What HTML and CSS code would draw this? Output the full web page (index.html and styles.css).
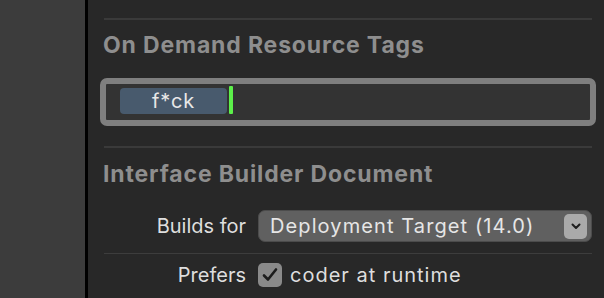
FILE: index.html
```html
<!DOCTYPE html>
<html>
<head>
<meta charset="utf-8">
<link rel="stylesheet" href="styles.css">
</head>
<body>
<div class="window">
  <div class="sidebar"></div>
  <div class="split"></div>
  <div class="inspector">
    <div class="sep sep-top"></div>
    <h2 class="section-title title-odr">On Demand Resource Tags</h2>
    <div class="token-field">
      <span class="token">f*ck</span>
      <span class="caret"></span>
    </div>
    <div class="sep sep-mid"></div>
    <h2 class="section-title title-ib">Interface Builder Document</h2>
    <div class="prop-row row-builds">
      <span class="prop-label">Builds for</span>
      <div class="popup">
        <span class="popup-text">Deployment Target (14.0)</span>
        <span class="popup-arrow">
          <svg width="10" height="7" viewBox="0 0 10 7"><path d="M1.5 1.5 L5 5 L8.5 1.5" fill="none" stroke="#1e1e1e" stroke-width="2" stroke-linecap="round" stroke-linejoin="round"/></svg>
        </span>
      </div>
    </div>
    <div class="sep sep-low"></div>
    <div class="prop-row row-prefers">
      <span class="prop-label">Prefers</span>
      <label class="check">
        <span class="checkbox">
          <svg width="18" height="16" viewBox="0 0 18 16"><path d="M3 8.5 L7 12.5 L15 2.5" fill="none" stroke="#1c1c1c" stroke-width="2.6" stroke-linecap="round" stroke-linejoin="round"/></svg>
        </span>
        <span class="check-text">coder at runtime</span>
      </label>
    </div>
  </div>
</div>
</body>
</html>
```
FILE: styles.css
```css
html, body {
  margin: 0;
  padding: 0;
  background: #282828;
}
.window {
  display: flex;
  width: 604px;
  height: 298px;
  overflow: hidden;
  font-family: "Inter", "Liberation Sans", sans-serif;
}
.sidebar {
  width: 85px;
  background: #3c3c3c;
  flex: none;
}
.split {
  width: 3px;
  background: #000;
  flex: none;
}
.inspector {
  flex: 1;
  background: #282828;
  padding: 0 12px 0 15px;
  display: flex;
  flex-direction: column;
}
.sep {
  height: 2px;
  background: #3a3a3a;
  margin-left: 1px;
  flex: none;
}
.sep-top { margin-top: 18px; }
.sep-mid { margin-top: 20px; }
.sep-low { margin-top: 11px; height: 1px; background: #3d3d3d; }
.section-title {
  margin: 0;
  font-size: 23px;
  line-height: 26px;
  font-weight: 700;
  color: #8e8e8e;
  letter-spacing: 0.85px;
}
.title-odr { margin-top: 12px; }
.title-ib { margin-top: 13px; }
.token-field {
  margin: 20px -4px 0 -3px;
  height: 32px;
  border: 6px solid #7f7f7f;
  border-radius: 7px;
  background: #333333;
  display: flex;
  align-items: flex-start;
  padding: 4px 0 0 14px;
  box-sizing: content-box;
}
.token {
  width: 107px;
  height: 26px;
  background: #485a6d;
  border-radius: 4px;
  color: #e8e8e8;
  font-size: 20px;
  line-height: 26px;
  letter-spacing: 0.8px;
  text-align: center;
}
.caret {
  width: 4px;
  height: 28px;
  margin: -2px 0 0 2px;
  background: #5cf04a;
  border-radius: 1px;
}
.prop-row {
  display: grid;
  grid-template-columns: 143px 1fr;
  column-gap: 12px;
  align-items: center;
}
.row-builds { margin-top: 23px; }
.row-prefers { margin-top: 9px; }
.prop-label {
  text-align: right;
  color: #dedede;
  font-size: 20px;
  line-height: 24px;
}
.popup {
  height: 30px;
  border: 1px solid #4c4c4c;
  background: #606060;
  border-radius: 7px;
  display: flex;
  align-items: center;
  justify-content: space-between;
  padding: 0 4px 0 11px;
}
.popup-text {
  color: #e6e6e6;
  font-size: 20px;
  line-height: 24px;
  letter-spacing: 1.1px;
}
.popup-arrow {
  width: 23px;
  height: 25px;
  margin-top: 1px;
  background: #aaaaaa;
  border-radius: 5px;
  display: flex;
  align-items: center;
  justify-content: center;
}
.check {
  display: flex;
  align-items: center;
  gap: 8px;
}
.checkbox {
  width: 24px;
  height: 24px;
  background: #8a8a8a;
  border-radius: 5px;
  display: flex;
  align-items: center;
  justify-content: center;
}
.check-text {
  color: #dedede;
  font-size: 20px;
  line-height: 24px;
  letter-spacing: 1px;
}
```
